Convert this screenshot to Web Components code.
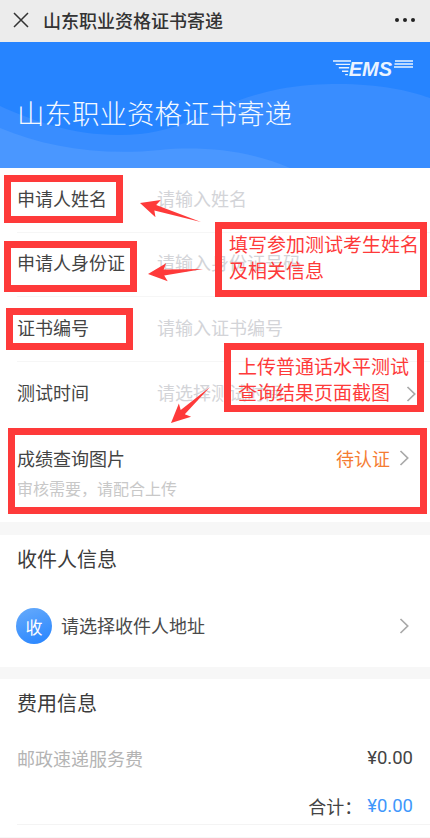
<!DOCTYPE html>
<html lang="zh">
<head>
<meta charset="utf-8">
<title>山东职业资格证书寄递</title>
<style>
  html, body { margin: 0; padding: 0; background: #f7f7f7; }
  body { font-family: "Noto Sans CJK SC", "Roboto", sans-serif; color: #333; width: 430px; height: 838px; overflow: hidden; }
  #page { position: relative; width: 430px; height: 838px; overflow: hidden; }
</style>
</head>
<body>
<div id="page">
  <ems-navbar>山东职业资格证书寄递</ems-navbar>
  <ems-hero>山东职业资格证书寄递</ems-hero>

  <ems-card>
    <ems-field label="申请人姓名" hint="请输入姓名"></ems-field>
    <ems-field label="申请人身份证" hint="请输入身份证号码"></ems-field>
    <ems-field label="证书编号" hint="请输入证书编号"></ems-field>
    <ems-field label="测试时间" hint="请选择测试时间" arrow last></ems-field>
    <ems-upload label="成绩查询图片" status="待认证" note="审核需要，请配合上传"></ems-upload>
  </ems-card>

  <ems-section heading="收件人信息" gap="13" pad="9" height="132">
    <ems-address badge="收">请选择收件人地址</ems-address>
  </ems-section>

  <ems-section heading="费用信息" gap="12" pad="9" height="158">
    <ems-fee name="邮政速递服务费" value="¥0.00"></ems-fee>
    <ems-total value="¥0.00">合计：</ems-total>
  </ems-section>

  <!-- red markup drawn on top of the screenshot -->
  <mark-box x="4" y="175" w="119" h="48"></mark-box>
  <mark-box x="4" y="241" w="133" h="51"></mark-box>
  <mark-box x="6" y="308" w="127" h="42"></mark-box>
  <mark-box x="8" y="428" w="419" h="86"></mark-box>
  <mark-box x="215" y="222" w="212" h="75" pad="2 0 0 7">填写参加测试考生姓名<br>及相关信息</mark-box>
  <mark-box x="224" y="343" w="200" h="69" pad="3 0 0 7">上传普通话水平测试<br>查询结果页面截图</mark-box>
  <mark-arrow x1="201" y1="222" x2="140" y2="203"></mark-arrow>
  <mark-arrow x1="203" y1="269" x2="148" y2="274"></mark-arrow>
  <mark-arrow x1="210" y1="387" x2="171" y2="423"></mark-arrow>
</div>

<script>
const CHEVRON = `<svg width="12" height="18" viewBox="0 0 12 18" fill="none" stroke="#a9a9a9" stroke-width="1.7"><path d="M2.5 2l7.2 7-7.2 7"/></svg>`;

class EmsNavbar extends HTMLElement {
  constructor() {
    super();
    this.attachShadow({ mode: "open" }).innerHTML = `
      <style>
        :host { display: flex; align-items: center; height: 42px; background: #ececec; box-sizing: border-box; padding: 0 15px 2px 13px; }
        .close { flex: none; margin-right: 14px; display: block; }
        .title { flex: 1; font-size: 18px; font-weight: 500; color: #333; white-space: nowrap; }
        .more { display: flex; gap: 4px; }
        .more i { width: 4px; height: 4px; border-radius: 50%; background: #222; }
      </style>
      <svg class="close" width="16" height="16" viewBox="0 0 16 16" stroke="#333" stroke-width="1.5"><path d="M1 1l14 14M15 1L1 15"/></svg>
      <div class="title"><slot></slot></div>
      <div class="more"><i></i><i></i><i></i></div>`;
  }
}

class EmsHero extends HTMLElement {
  constructor() {
    super();
    this.attachShadow({ mode: "open" }).innerHTML = `
      <style>
        :host { display: block; position: relative; height: 126px; background: #2684ff; overflow: hidden; }
        .waves { position: absolute; left: 0; top: 0; }
        .inner { position: relative; display: flex; flex-direction: column; height: 100%; box-sizing: border-box; padding: 18px 17px 0 17px; }
        .logo { align-self: flex-end; display: flex; align-items: flex-start; height: 18px; }
        .logo b { font: italic 900 20px/17px "Liberation Sans", sans-serif; color: #eaf3ff; margin: 1px 2px 0 -2px; }
        h1 { margin: 14px 0 0; font-size: 27.5px; line-height: 40px; font-weight: 300; color: #f4f9ff; white-space: nowrap; }
      </style>
      <svg class="waves" width="430" height="126" viewBox="0 0 430 126">
        <path d="M0 64C40 82 85 97 140 92C200 86 225 50 310 43C365 39 405 47 430 56V126H0Z" fill="#398dff"/>
        <path d="M0 86C45 105 100 114 160 108C200 104 250 108 290 126H0Z" fill="#4a97ff"/>
      </svg>
      <div class="inner">
        <div class="logo">
          <svg width="18" height="17" viewBox="0 0 20 17" preserveAspectRatio="none" fill="none" stroke="#eaf3ff" stroke-width="1.4"><path d="M0 1H20M3 4.4H19M6.5 7.8H18M10 11.2H17M13.5 14.6H16.5"/></svg>
          <b>EMS</b>
          <svg width="19" height="9" viewBox="0 0 19 9" fill="none" stroke="#eaf3ff" stroke-width="1.4"><path d="M1 1H19M.5 4H19M0 7H19"/></svg>
        </div>
        <h1><slot></slot></h1>
      </div>`;
  }
}

class EmsCard extends HTMLElement {
  constructor() {
    super();
    this.attachShadow({ mode: "open" }).innerHTML = `
      <style>
        :host { display: block; background: #fff; padding-left: 17px; }
      </style>
      <slot></slot>`;
  }
}

class EmsField extends HTMLElement {
  constructor() {
    super();
    const arrow = this.hasAttribute("arrow") ? CHEVRON : "";
    this.attachShadow({ mode: "open" }).innerHTML = `
      <style>
        :host { display: flex; align-items: center; height: 64.5px; box-sizing: border-box; padding: 0 13px 4px 0; border-bottom: 1px solid #f6f6f6; font-size: 18px; }
        :host([last]) { border-bottom: 0; }
        .label { width: 140px; flex: none; color: #444; white-space: nowrap; }
        .hint { flex: 1; color: #d3d4d8; white-space: nowrap; }
        svg { display: block; margin-top: 4px; }
      </style>
      <div class="label">${this.getAttribute("label")}</div>
      <div class="hint">${this.getAttribute("hint")}</div>
      ${arrow}`;
  }
}

class EmsUpload extends HTMLElement {
  constructor() {
    super();
    this.attachShadow({ mode: "open" }).innerHTML = `
      <style>
        :host { display: block; padding: 17px 20px 22px 0; }
        .top { display: flex; align-items: center; height: 30px; font-size: 18px; }
        .label { flex: 1; color: #444; }
        .status { color: #f57c32; margin-right: 8px; }
        .note { margin-top: 3px; font-size: 16px; line-height: 24px; color: #c8c8c8; }
        svg { display: block; }
      </style>
      <div class="top">
        <div class="label">${this.getAttribute("label")}</div>
        <div class="status">${this.getAttribute("status")}</div>
        ${CHEVRON}
      </div>
      <div class="note">${this.getAttribute("note")}</div>`;
  }
}

class EmsSection extends HTMLElement {
  constructor() {
    super();
    this.attachShadow({ mode: "open" }).innerHTML = `
      <style>
        :host { display: block; box-sizing: border-box; background: #fff; margin-top: ${this.getAttribute("gap")}px; padding: ${this.getAttribute("pad")}px 0 0 17px; height: ${this.getAttribute("height")}px; }
        h2 { margin: 0; font-size: 20px; line-height: 30px; font-weight: 400; color: #3c3c3c; }
      </style>
      <h2>${this.getAttribute("heading")}</h2>
      <slot></slot>`;
  }
}

class EmsAddress extends HTMLElement {
  constructor() {
    super();
    this.attachShadow({ mode: "open" }).innerHTML = `
      <style>
        :host { display: flex; align-items: center; margin: 34px 0 0 -1px; padding-right: 20px; font-size: 18px; color: #4a4a4a; }
        .badge { width: 36px; height: 36px; flex: none; margin-right: 9px; border-radius: 50%; background: linear-gradient(160deg, #67abfb, #2684ff); color: #fff; font-size: 17px; display: flex; align-items: center; justify-content: center; }
        .text { flex: 1; padding-bottom: 2px; }
        svg { display: block; }
      </style>
      <div class="badge">${this.getAttribute("badge")}</div>
      <div class="text"><slot></slot></div>
      ${CHEVRON}`;
  }
}

class EmsFee extends HTMLElement {
  constructor() {
    super();
    this.attachShadow({ mode: "open" }).innerHTML = `
      <style>
        :host { display: flex; justify-content: space-between; align-items: center; height: 30px; margin-top: 25px; padding-right: 17px; font-size: 18px; }
        .name { color: #b4b4b4; }
        .value { color: #444; font-size: 18.5px; font-family: "Roboto", sans-serif; }
      </style>
      <div class="name">${this.getAttribute("name")}</div>
      <div class="value">${this.getAttribute("value")}</div>`;
  }
}

class EmsTotal extends HTMLElement {
  constructor() {
    super();
    this.attachShadow({ mode: "open" }).innerHTML = `
      <style>
        :host { display: flex; justify-content: flex-end; align-items: center; height: 37px; margin-top: 15px; padding: 0 17px 1px 0; font-size: 18px; color: #444; border-bottom: 1px solid #f4f4f4; box-sizing: border-box; }
        .value { color: #3f97fb; font-size: 18.5px; margin-left: 5px; font-family: "Roboto", sans-serif; }
      </style>
      <slot></slot><div class="value">${this.getAttribute("value")}</div>`;
  }
}

class MarkBox extends HTMLElement {
  constructor() {
    super();
    const a = (n) => this.getAttribute(n);
    const pad = (a("pad") || "0 0 0 0").split(" ").map((v) => v + "px").join(" ");
    this.attachShadow({ mode: "open" }).innerHTML = `
      <style>
        :host { position: absolute; left: ${a("x")}px; top: ${a("y")}px; width: ${a("w")}px; height: ${a("h")}px; box-sizing: border-box; border: 7px solid #fe3a3a; color: #fe3a3a; font-size: 19px; line-height: 26px; white-space: nowrap; padding: ${pad}; }
      </style>
      <div><slot></slot></div>`;
  }
}

// arrow drawn as a long thin wedge from tail to tip, with a barbed head
class MarkArrow extends HTMLElement {
  constructor() {
    super();
    const [x1, y1, x2, y2] = ["x1", "y1", "x2", "y2"].map((n) => +this.getAttribute(n));
    const len = Math.hypot(x2 - x1, y2 - y1);
    const ux = (x2 - x1) / len, uy = (y2 - y1) / len;
    const at = (d, s) => `${x2 - ux * d - uy * s},${y2 - uy * d + ux * s}`;
    const pts = [`${x1},${y1}`, at(16, 3), at(19, 9), `${x2},${y2}`, at(19, -9), at(16, -3)].join(" ");
    this.attachShadow({ mode: "open" }).innerHTML = `
      <style>
        :host { position: absolute; left: 0; top: 0; pointer-events: none; }
        svg { display: block; }
      </style>
      <svg width="430" height="838"><polygon points="${pts}" fill="#fe3a3a"/></svg>`;
  }
}

customElements.define("ems-navbar", EmsNavbar);
customElements.define("ems-hero", EmsHero);
customElements.define("ems-card", EmsCard);
customElements.define("ems-field", EmsField);
customElements.define("ems-upload", EmsUpload);
customElements.define("ems-section", EmsSection);
customElements.define("ems-address", EmsAddress);
customElements.define("ems-fee", EmsFee);
customElements.define("ems-total", EmsTotal);
customElements.define("mark-box", MarkBox);
customElements.define("mark-arrow", MarkArrow);
</script>
</body>
</html>
